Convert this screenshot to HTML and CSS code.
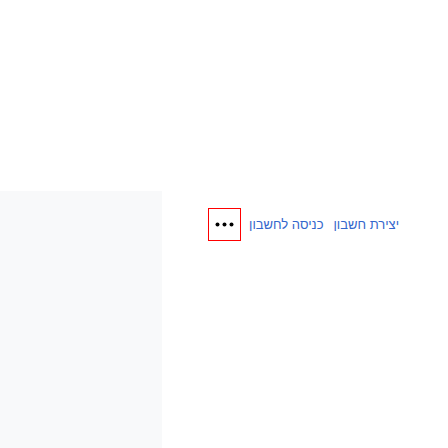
FILE: index.html
```html
<!DOCTYPE html>
<html lang="he">
<head>
<meta charset="utf-8">
<link rel="stylesheet" href="styles.css">
</head>
<body>
<div class="page">
  <aside class="side"></aside>
  <main class="main">
    <div class="bar">
      <div class="more" role="button" aria-label="עוד">
        <svg class="dots" width="31" height="31" viewBox="0 0 31 31" xmlns="http://www.w3.org/2000/svg">
          <circle cx="8.5" cy="15.5" r="2" fill="#000"/>
          <circle cx="15.5" cy="15.5" r="2" fill="#000"/>
          <circle cx="22.5" cy="15.5" r="2" fill="#000"/>
        </svg>
      </div>
      <nav class="links" dir="rtl">
        <a href="#">יצירת חשבון</a>
        <a href="#">כניסה לחשבון</a>
      </nav>
    </div>
  </main>
</div>
</body>
</html>
```
FILE: styles.css
```css
html, body {
  margin: 0;
  padding: 0;
  background: #ffffff;
  font-family: "Liberation Sans", Arial, sans-serif;
}
.page {
  display: flex;
  margin-top: 191px;
  height: 257px;
}
.side {
  width: 162px;
  flex: none;
  background: #f8f9fa;
}
.main {
  flex: 1;
  padding: 17px 0 0 46px;
}
.bar {
  display: flex;
  align-items: center;
  gap: 8px;
}
.more {
  box-sizing: border-box;
  flex: none;
  width: 33px;
  height: 33px;
  border: 1px solid #ff0000;
  background: #ffffff;
}
.dots {
  display: block;
}
.links {
  display: flex;
  gap: 10px;
  font-size: 13px;
  line-height: 16px;
}
.links a {
  color: #3366cc;
  text-decoration: none;
}
```
